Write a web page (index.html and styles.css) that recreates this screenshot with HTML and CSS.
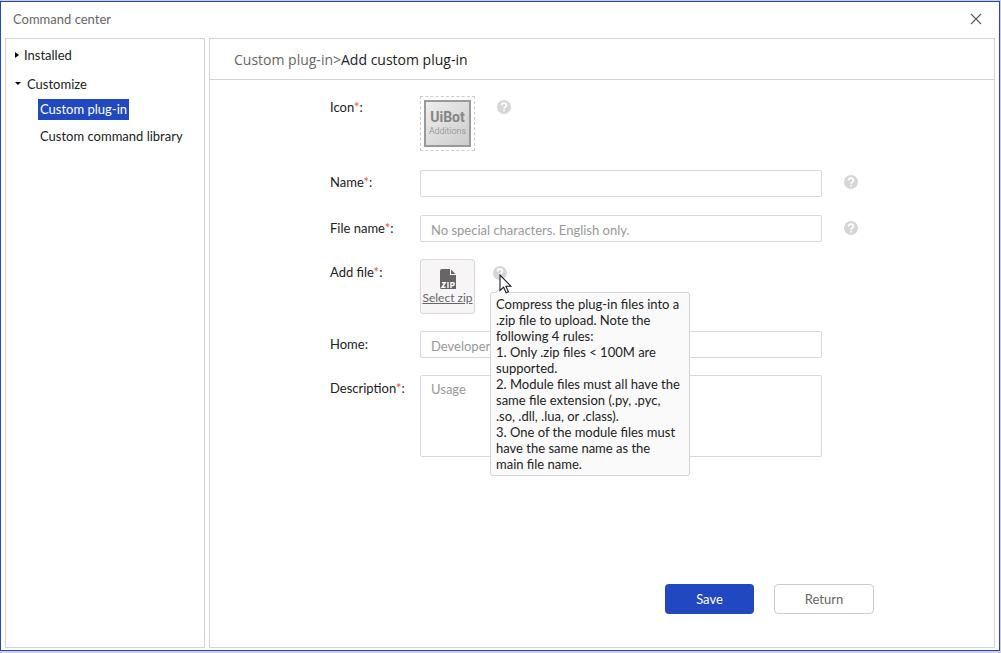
FILE: index.html
```html
<!DOCTYPE html>
<html lang="en">
<head>
<meta charset="utf-8">
<title>Command center</title>
<link rel="stylesheet" href="styles.css">
</head>
<body>
<svg class="sprite" aria-hidden="true">
  <symbol id="help" viewBox="0 0 14 14">
    <circle cx="7" cy="7" r="7" fill="#d6d6d6"/>
    <path d="M4.500 5.500C4.500 3.900 5.600 3.100 7 3.100s2.400.9 2.400 2.200C9.400 6.900 7.100 7 7.100 8.800" fill="none" stroke="#fff" stroke-width="1.600"/>
    <rect x="6.200" y="9.800" width="1.700" height="1.600" fill="#fff"/>
  </symbol>
</svg>
<div class="window">
  <header class="titlebar">
    <h1 class="title">Command center</h1>
    <button class="close" type="button" aria-label="Close">
      <svg width="12" height="12" viewBox="0 0 12 12"><path d="M1 1l10 10M11 1L1 11" stroke="#5c5f66" stroke-width="1.200"/></svg>
    </button>
  </header>
  <div class="body">
    <nav class="sidebar">
      <button class="group" type="button" aria-expanded="false"><svg width="4" height="6" viewBox="0 0 4 6"><path d="M0 0l4 3-4 3z"/></svg>Installed</button>
      <button class="group group-open" type="button" aria-expanded="true"><svg width="6" height="4" viewBox="0 0 6 4"><path d="M0 0h6L3 3z"/></svg>Customize</button>
      <ul class="sublist">
        <li><a class="sublink sublink-active" href="#plugin">Custom plug-in</a></li>
        <li><a class="sublink" href="#library">Custom command library</a></li>
      </ul>
    </nav>
    <main class="panel">
      <div class="crumbs"><a class="crumb" href="#plugin">Custom plug-in&gt;</a><span>Add custom plug-in</span></div>
      <form class="form">
        <div class="row row-icon">
          <label class="label label-icon" for="icon">Icon<b class="req">*</b>:</label>
          <button class="icon-tile" id="icon" type="button">
            <span class="logo"><span class="logo-name">UiBot</span><span class="logo-sub">Additions</span></span>
          </button>
          <svg class="help help-icon" width="14" height="14"><use href="#help"/></svg>
        </div>
        <div class="row row-name">
          <label class="label label-name" for="name">Name<b class="req">*</b>:</label>
          <input class="field" id="name" type="text">
          <svg class="help" width="14" height="14"><use href="#help"/></svg>
        </div>
        <div class="row">
          <label class="label" for="file">File name<b class="req">*</b>:</label>
          <input class="field" id="file" type="text" placeholder="No special characters. English only.">
          <svg class="help help-file" width="14" height="14"><use href="#help"/></svg>
        </div>
        <div class="row">
          <label class="label" for="zip">Add file<b class="req">*</b>:</label>
          <button class="zip-tile" id="zip" type="button">
            <svg width="16" height="20" viewBox="0 0 16 20">
              <path d="M2 0h8v6h6v14H1.500Q0 20 0 18.500V2Q0 0 2 0z" fill="#666"/>
              <path d="M11 .5L15.500 5H11z" fill="#666"/>
              <path d="M2 13.700h3.300L2 18.300h3.600M8 13v6M11 19v-5.300h2q1.300 0 1.300 1.400T13 16.600h-2" fill="none" stroke="#fff" stroke-width="1.400"/>
            </svg>
            <span class="zip-text">Select zip</span>
          </button>
          <div class="help-anchor">
            <svg class="help" width="14" height="14"><use href="#help"/></svg>
            <div class="tooltip" role="tooltip">Compress the plug-in files into a<br>.zip file to upload. Note the<br>following 4 rules:<br>1. Only .zip files &lt; 100M are<br>supported.<br>2. Module files must all have the<br>same file extension (.py, .pyc,<br>.so, .dll, .lua, or .class).<br>3. One of the module files must<br>have the same name as the<br>main file name.</div>
            <svg class="cursor" width="13" height="20" viewBox="0 0 13 20"><path d="M1 1v15.500l3.600-3.400 2.500 5.700 2.300-1-2.500-5.500H12z" fill="#fff" stroke="#1c1c28" stroke-width="1.100"/></svg>
          </div>
        </div>
        <div class="row">
          <label class="label" for="home">Home:</label>
          <input class="field field-plain" id="home" type="text" placeholder="Developer">
        </div>
        <div class="row">
          <label class="label" for="desc">Description<b class="req">*</b>:</label>
          <textarea class="field field-plain area" id="desc" placeholder="Usage"></textarea>
        </div>
        <div class="actions">
          <button class="btn btn-save" type="submit">Save</button>
          <button class="btn btn-return" type="button">Return</button>
        </div>
      </form>
    </main>
  </div>
</div>
</body>
</html>
```
FILE: styles.css
```css
* { box-sizing: border-box; }
body {
  margin: 0;
  height: 100vh;
  padding: 1px 1px 2px 0;
  background: #cfcfd3;
  font: 13px/16px Lato, "Noto Sans", sans-serif;
  color: #222;
}
button, input, textarea { font: inherit; color: inherit; margin: 0; }
button { padding: 0; border: 0; background: none; }
.sprite { position: absolute; width: 0; height: 0; }
.window {
  height: 100%;
  display: flex;
  flex-direction: column;
  border: 1px solid #2148c0;
  background: #fff;
}
.titlebar {
  display: flex;
  align-items: center;
  justify-content: space-between;
  height: 36px;
  padding: 0 17px 2px 12px;
}
.title { margin: 0; font-size: 13px; font-weight: 400; color: #666; }
.close { display: flex; }
.body { flex: 1; display: flex; gap: 4px; padding: 0 4px 2px; min-height: 0; }
.sidebar { width: 200px; border: 1px solid #d4d4d8; padding-top: 8px; }
.group { display: flex; align-items: center; gap: 5px; height: 16px; padding-left: 9px; }
.group-open { margin-top: 13px; gap: 6px; }
.sublist { list-style: none; margin: 7px 0 0 32px; padding: 0; display: grid; gap: 6px; }
.sublink { display: inline-block; padding: 0 2px; line-height: 21px; color: #222; text-decoration: none; }
.sublink-active { background: #2148c0; color: #fff; }
.panel { flex: 1; display: flex; flex-direction: column; border: 1px solid #d4d4d8; min-width: 0; }
.crumbs { padding: 13px 24px 11px; border-bottom: 1px solid #d4d4d8; font: 14px/16px "Open Sans", "Noto Sans", sans-serif; }
.crumb { color: #666; text-decoration: none; }
.form { flex: 1; display: flex; flex-direction: column; padding: 16px 120px 33px; }
.row { display: flex; align-items: flex-start; margin-bottom: 17px; padding-right: 16px; }
.row-icon { margin-bottom: 19px; }
.row-name { margin-bottom: 18px; }
.label { width: 90px; line-height: 26px; }
.label-icon { line-height: 22px; }
.label-name { line-height: 24px; }
.req { font-weight: 400; color: #f0503c; }
.field {
  flex: 1;
  min-width: 0;
  height: 27px;
  padding: 2px 10px 0;
  border: 1px solid #d6d8e2;
  border-radius: 2px;
  background: #fff;
}
.field::placeholder { color: #999; opacity: 1; }
.field-plain { margin-right: 36px; }
.area { height: 82px; padding-top: 5px; resize: none; }
.help { display: block; margin: 5px 0 0 22px; }
.help-icon { margin-top: 4px; }
.help-file { margin-top: 6px; }
.icon-tile {
  width: 55px;
  height: 55px;
  padding: 3px;
  border: 1px dashed #ccc;
}
.logo {
  display: flex;
  flex-direction: column;
  align-items: center;
  justify-content: center;
  height: 47px;
  border: 2px solid #999;
  background: linear-gradient(135deg, #eee, #ccc);
  color: #858585;
}
.logo-name { font: bold 14px/15px Roboto, sans-serif; }
.logo-sub { font: 300 9px/12px Roboto, sans-serif; }
.zip-tile {
  display: flex;
  flex-direction: column;
  align-items: center;
  width: 55px;
  height: 55px;
  padding-top: 9px;
  border: 1px solid #d8d8d8;
  border-radius: 3px;
  background: #f7f5f5;
  color: #666;
}
.zip-text { font-size: 12px; line-height: 18px; text-decoration: underline; white-space: nowrap; }
.help-anchor { position: relative; margin: 2px 0 0 -4px; }
.tooltip {
  position: absolute;
  z-index: 1;
  left: 19px;
  top: 31px;
  width: 200px;
  padding: 3px 0 3px 5px;
  border: 1px solid #d4d4d8;
  border-radius: 3px;
  background: #fafafa;
  white-space: nowrap;
}
.tooltip::before {
  content: "";
  position: absolute;
  left: 6px;
  top: -5px;
  width: 8px;
  height: 8px;
  border: 1px solid #d4d4d8;
  border-right: 0;
  border-bottom: 0;
  background: #fafafa;
  transform: rotate(45deg);
}
.cursor { position: absolute; z-index: 2; left: 28px; top: 13px; }
.actions { display: flex; justify-content: flex-end; gap: 20px; margin-top: auto; }
.btn { height: 30px; border-radius: 4px; }
.btn-save { width: 89px; background: #2148c0; color: #fff; }
.btn-return { width: 100px; border: 1px solid #c8ccd6; color: #666; }
```
